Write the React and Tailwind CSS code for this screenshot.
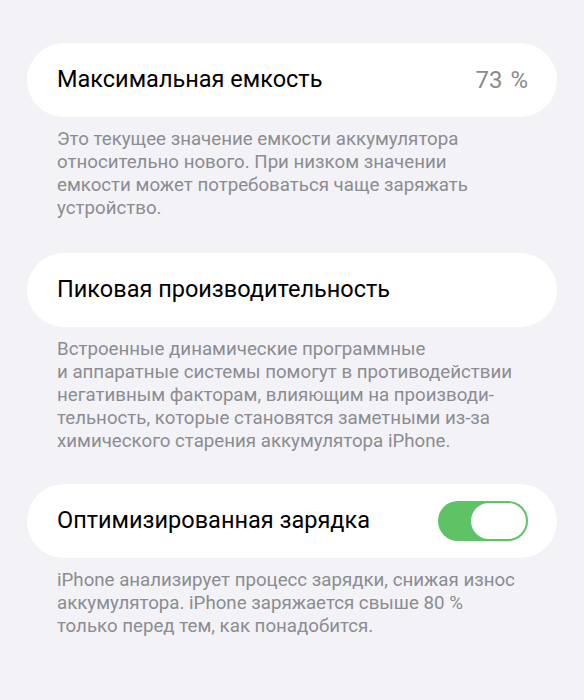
import React from 'react';

const Card = ({ title, children }) => (
  <div className="flex h-[74px] items-center justify-between rounded-full bg-white pl-[30px] pr-[29px]">
    <span className="text-[23.5px] text-black">{title}</span>
    {children}
  </div>
);

const Note = ({ lines }) => (
  <p className="mt-[11px] pl-[30px] text-[18.7px] leading-[23px] text-[#8c8c91]">
    {lines.map((l, i) => (
      <span key={i} className="block whitespace-nowrap">{l}</span>
    ))}
  </p>
);

const Toggle = () => (
  <div className="flex h-[40px] w-[90px] items-center rounded-full bg-[#5dc364] p-[2px] pl-[33px]">
    <div className="h-full w-full rounded-full bg-white" />
  </div>
);

export default function App() {
  return (
    <div
      className="min-h-[700px] bg-[#f2f2f7] px-[27px] pt-[43px]"
      style={{ fontFamily: 'Roboto, "Noto Sans", sans-serif' }}
    >
      <Card title="Максимальная емкость">
        <span className="text-[24px] [word-spacing:2px] text-[#8a8a8e]">73 %</span>
      </Card>
      <Note
        lines={[
          'Это текущее значение емкости аккумулятора',
          'относительно нового. При низком значении',
          'емкости может потребоваться чаще заряжать',
          'устройство.',
        ]}
      />

      <div className="mt-[33px]">
        <Card title="Пиковая производительность" />
      </div>
      <Note
        lines={[
          'Встроенные динамические программные',
          'и аппаратные системы помогут в противодействии',
          'негативным факторам, влияющим на производи-',
          'тельность, которые становятся заметными из-за',
          'химического старения аккумулятора iPhone.',
        ]}
      />

      <div className="mt-[31px]">
        <Card title="Оптимизированная зарядка">
          <Toggle />
        </Card>
      </div>
      <Note
        lines={[
          'iPhone анализирует процесс зарядки, снижая износ',
          'аккумулятора. iPhone заряжается свыше 80 %',
          'только перед тем, как понадобится.',
        ]}
      />
    </div>
  );
}
